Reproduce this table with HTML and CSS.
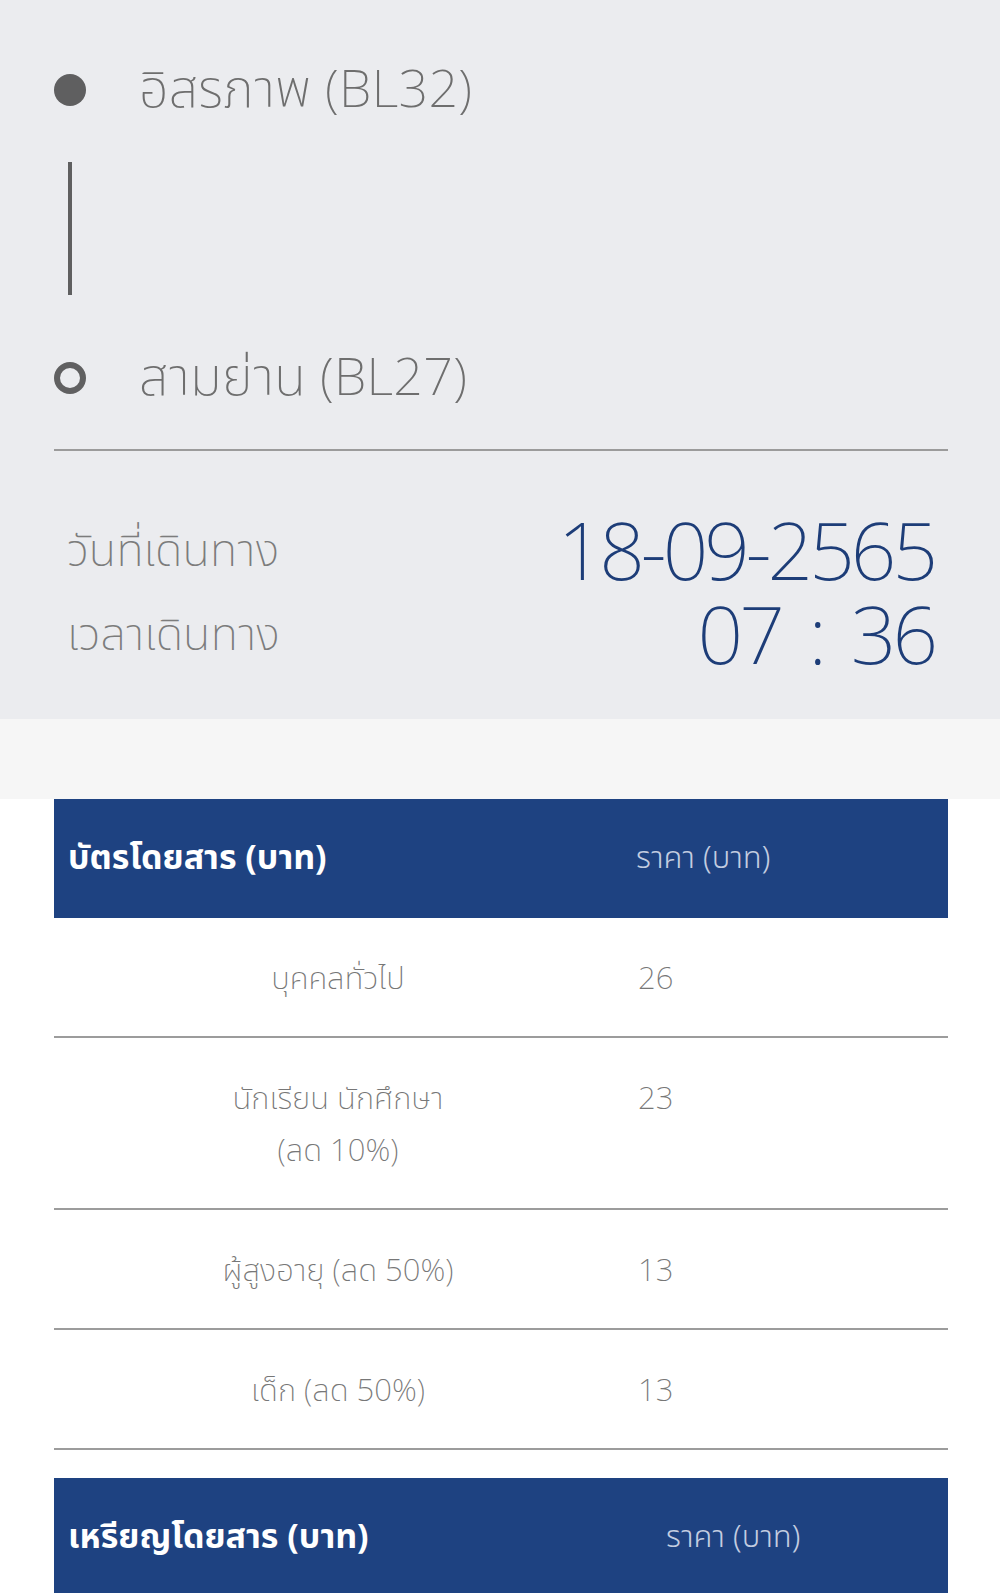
FILE: index.html
```html
<!DOCTYPE html>
<html lang="th">
<head>
<meta charset="utf-8">
<title>ค่าโดยสาร</title>
<link rel="stylesheet" href="styles.css">
</head>
<body>
<section class="trip">
  <div class="route">
    <div class="stop">
      <span class="dot dot-filled"></span>
      <span class="stop-name">อิสรภาพ (BL32)</span>
    </div>
    <div class="connector"><span class="connector-line"></span></div>
    <div class="stop">
      <span class="dot dot-hollow"></span>
      <span class="stop-name">สามย่าน (BL27)</span>
    </div>
  </div>
  <div class="when">
    <div class="when-row">
      <span class="when-label">วันที่เดินทาง</span>
      <span class="when-value">18-09-2565</span>
    </div>
    <div class="when-row">
      <span class="when-label">เวลาเดินทาง</span>
      <span class="when-value">07 : 36</span>
    </div>
  </div>
</section>
<div class="band"></div>
<section class="fares">
  <table class="fare-table">
    <thead>
      <tr><th class="col-type">บัตรโดยสาร (บาท)</th><th class="col-price">ราคา (บาท)</th></tr>
    </thead>
    <tbody>
      <tr><td class="cell-type">บุคคลทั่วไป</td><td class="cell-price">26</td></tr>
      <tr><td class="cell-type">นักเรียน นักศึกษา<br>(ลด 10%)</td><td class="cell-price">23</td></tr>
      <tr><td class="cell-type">ผู้สูงอายุ (ลด 50%)</td><td class="cell-price">13</td></tr>
      <tr><td class="cell-type">เด็ก (ลด 50%)</td><td class="cell-price">13</td></tr>
    </tbody>
  </table>
  <table class="fare-table coin">
    <thead>
      <tr><th class="col-type">เหรียญโดยสาร (บาท)</th><th class="col-price">ราคา (บาท)</th></tr>
    </thead>
  </table>
</section>
</body>
</html>
```
FILE: styles.css
```css
html, body {
  margin: 0;
  padding: 0;
  background: #ffffff;
}
body {
  font-family: "Noto Sans", "Noto Sans Thai", "DejaVu Sans", sans-serif;
  color: #6d6d6d;
  height: 1593px;
  overflow: hidden;
}
.trip {
  background: #ebecef;
  padding: 62px 52px 44px 54px;
}
.route {
  border-bottom: 2px solid #9b9b9b;
  padding-bottom: 43px;
}
.stop {
  display: flex;
  align-items: center;
  height: 56px;
}
.dot {
  width: 32px;
  height: 32px;
  border-radius: 50%;
  box-sizing: border-box;
  flex: none;
}
.dot-filled { background: #5f5f60; }
.dot-hollow { border: 6px solid #606061; }
.stop-name {
  margin-left: 53px;
  font-size: 52px;
  font-weight: 200;
  color: #6e6e6e;
  letter-spacing: 0.3px;
}
.connector {
  padding: 44px 0 55px 14px;
}
.connector-line {
  display: block;
  width: 4px;
  height: 133px;
  background: #5f5f60;
}
.when {
  padding: 56px 14px 0 13px;
}
.when-row {
  display: flex;
  justify-content: space-between;
  align-items: center;
  height: 84px;
}
.when-label {
  font-size: 45px;
  font-weight: 200;
  color: #7c7c7c;
  line-height: 1.2;
}
.when-value {
  font-size: 80px;
  line-height: 1;
  font-weight: 200;
  color: #1d3d78;
  letter-spacing: -4px;
  word-spacing: 11px;
}
.band {
  height: 80px;
  background: #f6f6f6;
}
.fares {
  padding: 0 52px 0 54px;
}
.fare-table {
  width: 100%;
  border-collapse: collapse;
}
.fare-table th {
  background: #1e4281;
  height: 119px;
  padding: 0 14px;
  text-align: left;
  vertical-align: middle;
}
.col-type {
  color: #ffffff;
  font-weight: 700;
  font-size: 34px;
}
.col-price {
  color: #c3cde0;
  font-weight: 300;
  font-size: 31px;
}
.fare-table td {
  border-bottom: 2px solid #9c9c9c;
  padding: 33px 16px 33px;
  font-size: 31px;
  line-height: 52px;
  vertical-align: top;
  color: #777777;
  font-weight: 200;
}
.cell-type {
  text-align: center;
  width: 536px;
}
.cell-price {
  text-align: left;
}
.coin {
  margin-top: 28px;
}
.coin .col-type { width: 570px; }
```
